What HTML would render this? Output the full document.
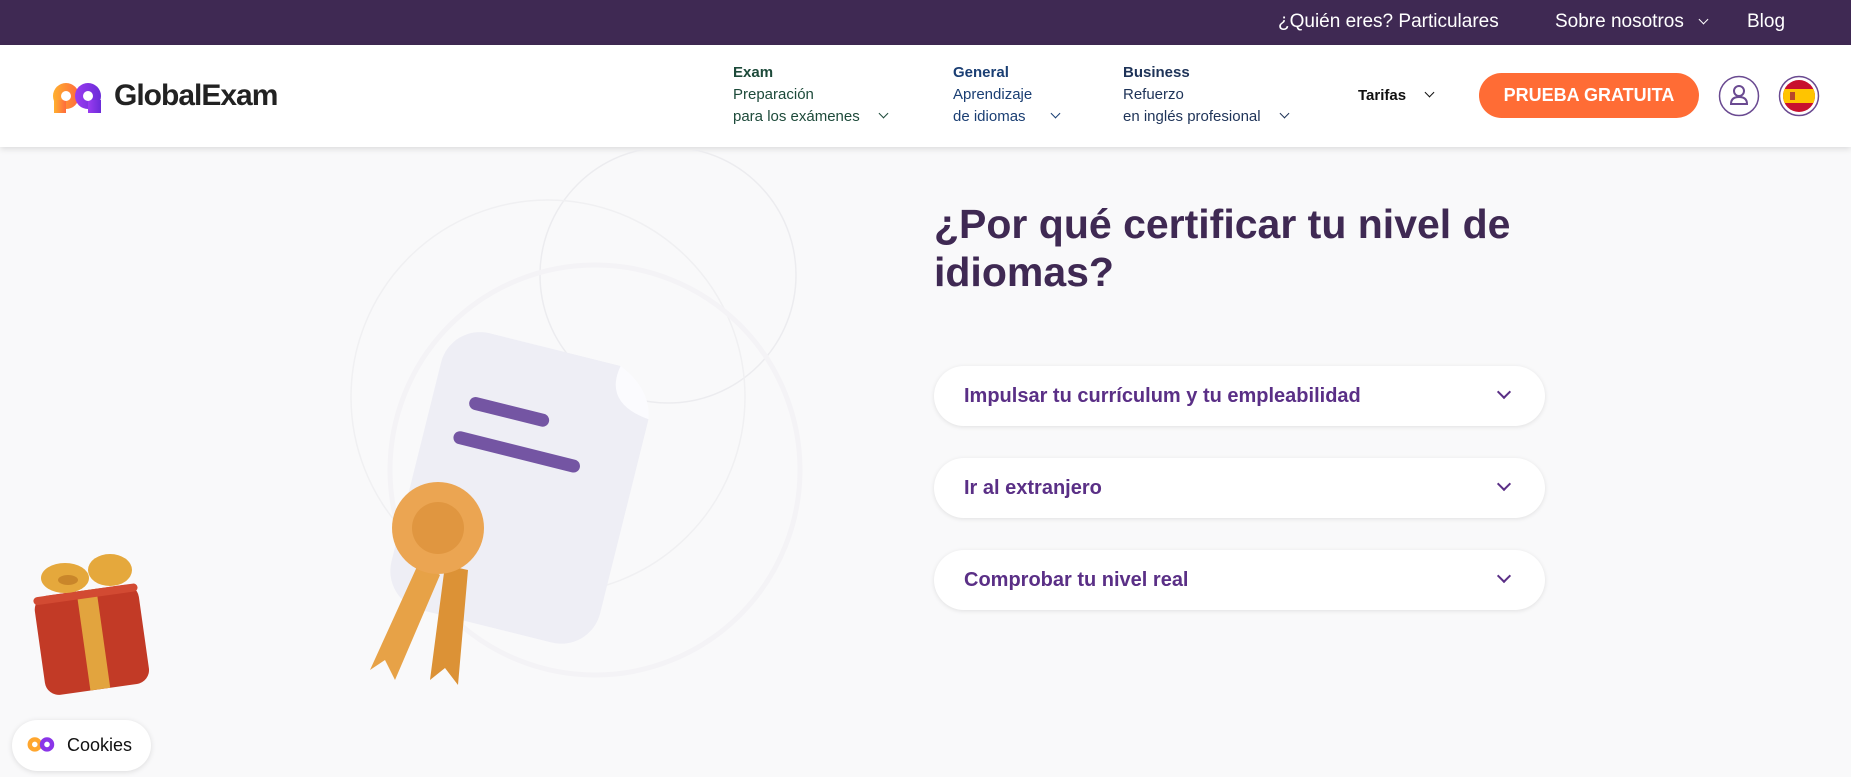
<!DOCTYPE html>
<html><head><meta charset="utf-8"><style>
*{margin:0;padding:0;box-sizing:border-box}
body{width:1851px;height:777px;overflow:hidden;background:#f9f9fa;font-family:"Liberation Sans",sans-serif;position:relative}
.top{position:absolute;left:0;top:0;width:1851px;height:45px;background:#3f2953;color:#fff;font-size:19px}
.top span{position:absolute;top:11px}
.hdr{position:absolute;left:0;top:45px;width:1851px;height:102px;background:#fff;box-shadow:0 2px 6px rgba(0,0,0,.12)}
.nav{position:absolute;font-size:15px;line-height:22px}
.nav b{display:block;font-size:15px}
.chev{display:inline-block;width:7px;height:7px;border-right:1.6px solid currentColor;border-bottom:1.6px solid currentColor;transform:rotate(45deg);margin-left:20px;position:relative;top:-4px}
.btn{position:absolute;left:1479px;top:73px;width:220px;height:45px;border-radius:23px;background:#ff6c35;color:#fff;font-weight:bold;font-size:18px;text-align:center;line-height:45px}
h1{position:absolute;left:934px;top:200px;font-size:41px;line-height:48px;color:#3f2953;font-weight:bold;width:640px}
.acc{position:absolute;left:934px;width:611px;height:60px;background:#fff;border-radius:30px;box-shadow:0 1px 5px rgba(0,0,0,.1);color:#5a2f86;font-weight:bold;font-size:20px;line-height:60px;padding-left:30px}
.acc i{position:absolute;right:36px;top:21px;width:10px;height:10px;border-right:2.6px solid #5a2f86;border-bottom:2.6px solid #5a2f86;transform:rotate(45deg)}
.ck{position:absolute;left:12px;top:720px;width:139px;height:51px;background:#fff;border-radius:26px;box-shadow:0 1px 6px rgba(0,0,0,.12);font-size:18px;line-height:51px;padding-left:55px;color:#111}
</style></head><body>
<div class="top">
<span style="left:1278px">¿Quién eres? Particulares</span>
<span style="left:1555px">Sobre nosotros</span>
<span style="left:1700px;top:11px"><i class="chev" style="margin:0;width:7px;height:7px"></i></span>
<span style="left:1747px">Blog</span>
</div>
<div class="hdr"></div>
<svg style="position:absolute;left:52px;top:80px" width="54" height="34" viewBox="0 0 54 34">
<defs><linearGradient id="g1" x1="0" x2="1"><stop offset="0" stop-color="#ffb02e"/><stop offset="1" stop-color="#ff6a3d"/></linearGradient><linearGradient id="g2" x1="0" x2="1"><stop offset="0" stop-color="#9b3cf0"/><stop offset="1" stop-color="#6a2bd8"/></linearGradient></defs>
<circle cx="14" cy="16" r="13" fill="url(#g1)"/><rect x="2" y="20" width="12" height="13" fill="url(#g1)"/>
<circle cx="36" cy="16" r="13" fill="url(#g2)"/><rect x="36" y="20" width="13" height="13" fill="url(#g2)"/>
<circle cx="14" cy="16" r="5" fill="#fff"/><circle cx="36" cy="16" r="5" fill="#fff"/>
</svg>
<div style="position:absolute;left:114px;top:79px;font-size:30px;font-weight:bold;color:#222;letter-spacing:-1px">GlobalExam</div>
<div class="nav" style="left:733px;top:62px;color:#1d4a3a"><b>Exam</b>Preparación<br>para los exámenes<i class="chev"></i></div>
<div class="nav" style="left:953px;top:62px;color:#1a3e73"><b>General</b>Aprendizaje<br>de idiomas<i class="chev" style="margin-left:26px"></i></div>
<div class="nav" style="left:1123px;top:62px;color:#1e3358"><b>Business</b>Refuerzo<br>en inglés profesional<i class="chev"></i></div>
<div class="nav" style="left:1358px;top:85px;color:#111"><b style="display:inline">Tarifas</b><i class="chev"></i></div>
<div class="btn">PRUEBA GRATUITA</div>
<svg style="position:absolute;left:1718px;top:75px" width="42" height="42" viewBox="0 0 42 42"><circle cx="21" cy="21" r="19.5" fill="#fff" stroke="#6a4a91" stroke-width="1.5"/><circle cx="21" cy="16" r="5" fill="none" stroke="#6a4a91" stroke-width="2"/><path d="M13 29c0-5 3-7 8-7s8 2 8 7z" fill="none" stroke="#6a4a91" stroke-width="2"/></svg>
<svg style="position:absolute;left:1778px;top:75px" width="42" height="42" viewBox="0 0 42 42"><circle cx="21" cy="21" r="19.5" fill="#fff" stroke="#6a4a91" stroke-width="1.5"/><clipPath id="c"><circle cx="21" cy="21" r="16"/></clipPath><g clip-path="url(#c)"><rect x="0" y="0" width="42" height="42" fill="#c8102e"/><rect x="0" y="14" width="42" height="14" fill="#ffc400"/><rect x="12" y="17" width="5" height="8" fill="#b7472a"/></g></svg>

<svg style="position:absolute;left:300px;top:150px" width="560" height="560" viewBox="300 150 560 560">
<circle cx="668" cy="275" r="128" fill="none" stroke="#ececef" stroke-width="1.5"/>
<circle cx="548" cy="397" r="197" fill="none" stroke="#f0f0f2" stroke-width="1.5"/>
<circle cx="595" cy="470" r="205" fill="none" stroke="#f4f3f6" stroke-width="5"/>
<g transform="rotate(14 520 480)">
<path d="M455 345 H590 L630 390 V590 a40 40 0 0 1 -40 40 H455 a40 40 0 0 1 -40 -40 V385 a40 40 0 0 1 40 -40z" fill="#eeeef5"/>
<path d="M590 345 q-8 40 40 45 q-5 -30 -40 -45z" fill="#fbfbfe"/>
<rect x="452" y="410" width="82" height="13" rx="6.5" fill="#7455a3"/>
<rect x="445" y="447" width="130" height="13" rx="6.5" fill="#7455a3"/>
</g>
<path d="M420 560 L370 670 L385 660 L395 680 L440 575z" fill="#e7a247"/>
<path d="M445 565 L430 680 L445 668 L458 685 L468 570z" fill="#dc9236"/>
<circle cx="438" cy="528" r="46" fill="#eba552"/>
<circle cx="438" cy="528" r="26" fill="#e09640"/>
</svg>

<h1>¿Por qué certificar tu nivel de idiomas?</h1>
<div class="acc" style="top:366px">Impulsar tu currículum y tu empleabilidad<i></i></div>
<div class="acc" style="top:458px">Ir al extranjero<i></i></div>
<div class="acc" style="top:550px">Comprobar tu nivel real<i></i></div>

<svg style="position:absolute;left:20px;top:540px" width="130" height="155" viewBox="0 0 130 155">
<g transform="rotate(-8 70 90)">
<rect x="18" y="50" width="105" height="100" rx="14" fill="#c23a26"/>
<rect x="62" y="50" width="20" height="100" fill="#e2a43e"/>
<rect x="18" y="50" width="105" height="8" rx="4" fill="#d24a32"/>
</g>
<ellipse cx="45" cy="38" rx="24" ry="15" fill="#e5a83c"/><ellipse cx="90" cy="30" rx="22" ry="16" fill="#e5a83c"/>
<ellipse cx="48" cy="40" rx="10" ry="5" fill="#c9862a"/>
</svg>
<div class="ck"><svg style="position:absolute;left:15px;top:15px" width="30" height="20" viewBox="0 0 54 34"><circle cx="14" cy="16" r="13" fill="#ffa62e"/><circle cx="36" cy="16" r="13" fill="#8a35e8"/><circle cx="14" cy="16" r="5" fill="#fff"/><circle cx="36" cy="16" r="5" fill="#fff"/></svg>Cookies</div>
</body></html>
